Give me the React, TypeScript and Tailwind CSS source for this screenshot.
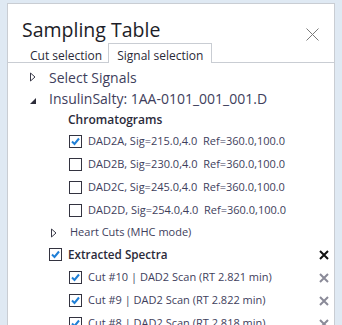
import { useState } from "react";

const font = { fontFamily: '"Open Sans", "Noto Sans", sans-serif' };

const chroma = [
  { label: "DAD2A, Sig=215.0,4.0", ref: "Ref=360.0,100.0", on: true },
  { label: "DAD2B, Sig=230.0,4.0", ref: "Ref=360.0,100.0", on: false },
  { label: "DAD2C, Sig=245.0,4.0", ref: "Ref=360.0,100.0", on: false },
  { label: "DAD2D, Sig=254.0,4.0", ref: "Ref=360.0,100.0", on: false },
];

const cuts = [
  { n: 10, rt: "2.821" },
  { n: 9, rt: "2.822" },
  { n: 8, rt: "2.818" },
];

export default function App() {
  const [tab, setTab] = useState(1);
  return (
    <div
      className="h-[325px] w-[342px] overflow-hidden bg-[#dfe9f3] pl-[7px] pt-[3px]"
      style={font}
    >
      <div className="h-[400px] w-[328px] border border-[#c9cdd3] bg-white">
        <div className="flex h-[39px] items-end justify-between pl-[14px] pr-[15px]">
          <span className="text-[19.5px] leading-[26px] text-[#1d1d28]">
            Sampling Table
          </span>
          <CloseIcon />
        </div>
        <div className="flex h-[20px] items-end border-b border-[#c9cdd3] pl-[13px]">
          <button
            onClick={() => setTab(0)}
            className={`-mb-px h-[20px] border border-b-0 pt-[4px] pl-[8px] pr-[5px] text-[12px] leading-[15px] text-[#2a2a38] ${
              tab === 0 ? "border-[#c9cdd3] bg-white" : "border-transparent"
            }`}
          >
            Cut selection
          </button>
          <button
            onClick={() => setTab(1)}
            className={`-mb-px h-[20px] border border-b-0 px-[8px] pt-[4px] text-[12px] leading-[15px] text-[#2a2a38] ${
              tab === 1 ? "border-[#c9cdd3] bg-white" : "border-transparent"
            }`}
          >
            Signal selection
          </button>
        </div>
        <div className="pt-[3px] text-[#3e3e5c]">
          <div className="flex h-[22px] items-center pl-[21px]">
            <Caret open={false} />
            <span className="ml-[12px] text-[14px]">Select Signals</span>
          </div>
          <div className="flex h-[21px] items-center pl-[21px]">
            <Caret open />
            <span className="ml-[12px] text-[14px]">InsulinSalty: 1AA-0101_001_001.D</span>
          </div>
          <div className="flex h-[21px] items-center pl-[60px]">
            <span className="text-[12px] font-semibold text-[#2a2a3a]">Chromatograms</span>
          </div>
          {chroma.map((c) => (
            <div key={c.label} className="flex h-[23px] items-center pl-[61px]">
              <Check on={c.on} />
              <span className="ml-[6px] whitespace-pre text-[11px]">
                {c.label}  {c.ref}
              </span>
            </div>
          ))}
          <div className="flex h-[21px] items-center pl-[42px]">
            <Caret open={false} />
            <span className="ml-[12px] text-[11px]">Heart Cuts (MHC mode)</span>
          </div>
          <div className="flex h-[23px] items-center pl-[41px] pr-[5px]">
            <Check on />
            <span className="ml-[6px] flex-1 text-[11.7px] font-semibold text-[#2a2a3a]">
              Extracted Spectra
            </span>
            <XMark color="#111111" />
          </div>
          {cuts.map((c) => (
            <div key={c.n} className="flex h-[23px] items-center pl-[61px] pr-[5px]">
              <Check on />
              <span className="ml-[6px] flex-1 text-[11px]">
                Cut #{c.n} | DAD2 Scan (RT {c.rt} min)
              </span>
              <XMark color="#8a8a98" />
            </div>
          ))}
        </div>
      </div>
    </div>
  );
}

function CloseIcon() {
  return (
    <svg width="13" height="13" viewBox="0 0 13 13" className="mb-[2px]">
      <path d="M0.5 0.5L12.5 12.5M12.5 0.5L0.5 12.5" stroke="#7a7a7a" strokeWidth="1" />
    </svg>
  );
}

function Caret({ open }: { open: boolean }) {
  if (open) {
    return (
      <svg width="8" height="8" viewBox="0 0 8 8" className="mt-[4px]">
        <path d="M7 1V7H1Z" fill="#2d2d3a" />
      </svg>
    );
  }
  return (
    <svg width="8" height="10" viewBox="0 0 8 10">
      <path d="M1.5 1V9L6 5Z" fill="none" stroke="#3a3a48" strokeWidth="1" />
    </svg>
  );
}

function Check({ on }: { on: boolean }) {
  return (
    <span className="flex size-[13px] shrink-0 items-center justify-center border border-[#333340] bg-white">
      {on && (
        <svg width="9" height="9" viewBox="0 0 9 9">
          <path d="M1 4.5L3.5 7L8 1.5" fill="none" stroke="#1f7fd6" strokeWidth="2" />
        </svg>
      )}
    </span>
  );
}

function XMark({ color }: { color: string }) {
  return (
    <svg width="10" height="10" viewBox="0 0 10 10">
      <path d="M1 1L9 9M9 1L1 9" stroke={color} strokeWidth="2" />
    </svg>
  );
}
